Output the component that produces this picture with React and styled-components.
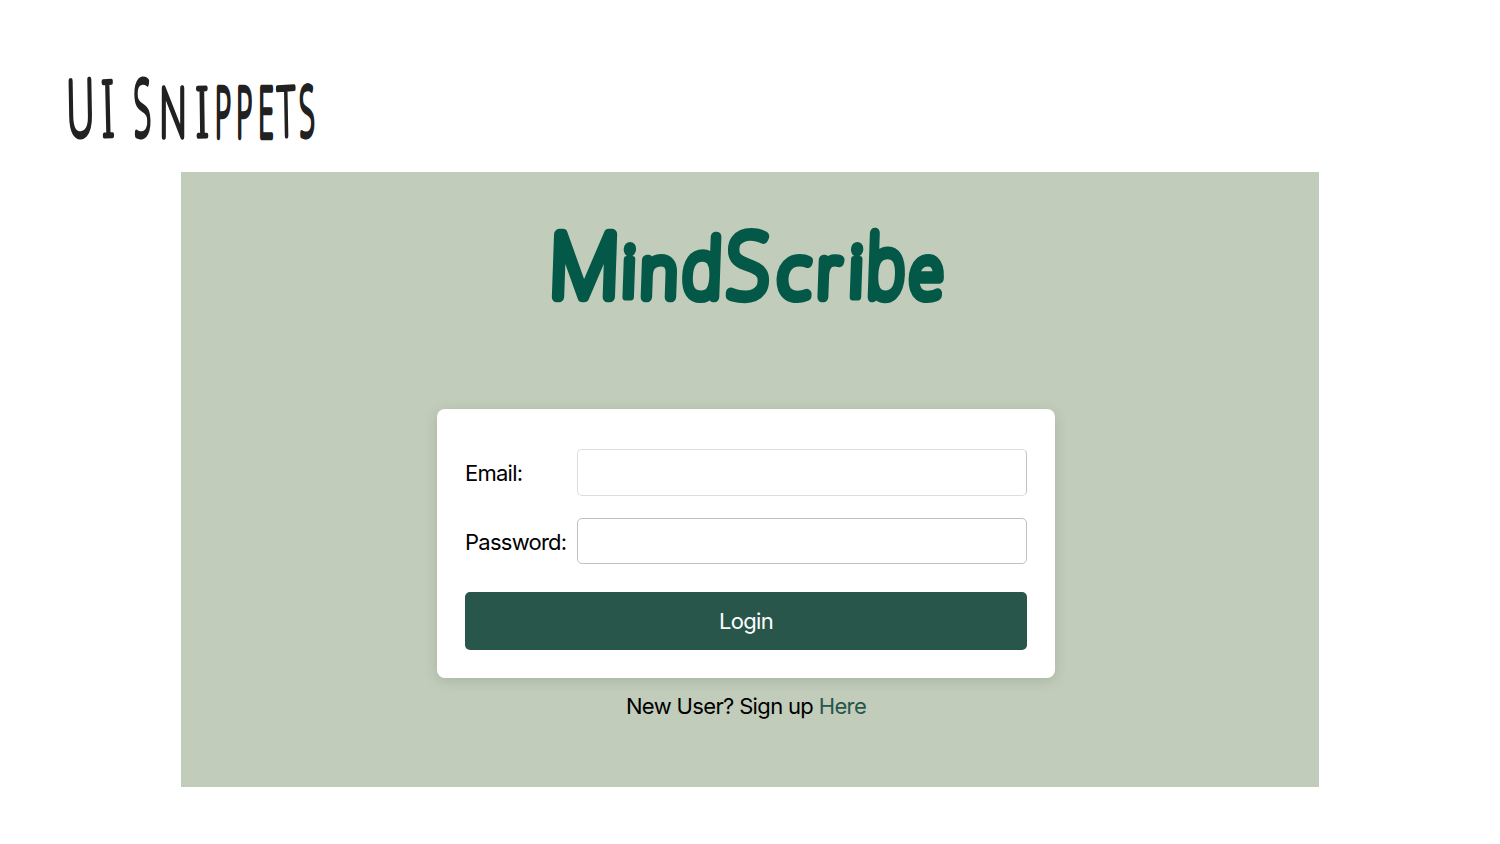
import React from "react";
import styled, { createGlobalStyle } from "styled-components";

const fields = [
  { id: "email", label: "Email:", type: "email", height: 47, border: "#dcdedd" },
  { id: "password", label: "Password:", type: "password", height: 46, border: "#c0c2c1" },
];

const App = () => {
  return (
    <>
      <GlobalStyle />
      <Slide>
        <SlideTitle>
          <Lettering width="270" height="80" $color="#212121" $stroke={4.8}>
            <g transform="scale(0.4 1)">
              <text y="64.5" fontSize="77">
                <Letter x="9" rotate="-2" textLength="67">U</Letter>
                <Letter x="93" rotate="-2" textLength="36" $stroke={3.4}>I</Letter>
                <tspan> </tspan>
                <tspan x="176" rotate="-3">S</tspan>
                <tspan fontSize="68">
                  <Letter x="238" textLength="69" $stroke={4}>N</Letter>
                  <Letter x="328" rotate="-1" textLength="36" $stroke={3.4}>I</Letter>
                  <tspan x="378 431">PP</tspan>
                  <tspan x="486">E</tspan>
                  <Letter x="535" rotate="-2" textLength="43" $stroke={4}>T</Letter>
                  <tspan x="590" rotate="-3">S</tspan>
                </tspan>
              </text>
            </g>
          </Lettering>
        </SlideTitle>

        <Screen>
          <Brand>
            <Lettering width="410" height="90" $color="#045847" $stroke={10}>
              <g transform="translate(5.5 0) skewX(-2) scale(0.88 1)">
                <text y="77" fontSize="70">
                  <Letter x="5" fontSize="88" textLength="80">M</Letter>
                  <Dotted x="87">i</Dotted>
                  <Letter x="109" textLength="42">n</Letter>
                  <Letter x="157" fontSize="79" textLength="44">d</Letter>
                  <tspan x="207" fontSize="88">S</tspan>
                  <Letter x="265" textLength="36">c</Letter>
                  <tspan x="310">r</tspan>
                  <Dotted x="345">i</Dotted>
                  <Letter x="366" fontSize="84" textLength="43">b</Letter>
                  <tspan x="415">e</tspan>
                </text>
              </g>
            </Lettering>
          </Brand>

          <LoginCard onSubmit={(e) => e.preventDefault()}>
            {fields.map((field) => (
              <Field key={field.id}>
                <Label htmlFor={field.id}>{field.label}</Label>
                <Input
                  id={field.id}
                  type={field.type}
                  $height={field.height}
                  $border={field.border}
                />
              </Field>
            ))}
            <LoginButton type="submit">Login</LoginButton>
          </LoginCard>

          <SignUp>
            New User? Sign up <SignUpLink href="#">Here</SignUpLink>
          </SignUp>
        </Screen>
      </Slide>
    </>
  );
};

const GlobalStyle = createGlobalStyle`
  * {
    box-sizing: border-box;
  }

  body {
    margin: 0;
    background: #ffffff;
    font-family: Inter, "Liberation Sans", sans-serif;
  }
`;

const Slide = styled.main`
  width: 1500px;
  height: 844px;
  padding-top: 72px;
  overflow: hidden;
`;

const SlideTitle = styled.h1`
  height: 100px;
  margin: 0;
  padding-left: 64px;
`;

// Thin letters thickened with a round stroke, for the handwritten look
const Lettering = styled.svg`
  display: block;
  overflow: visible;

  text {
    font-family: "Noto Sans", sans-serif;
    font-weight: 100;
    fill: ${(p) => p.$color};
    stroke: ${(p) => p.$color};
    stroke-width: ${(p) => p.$stroke}px;
    stroke-linejoin: round;
    stroke-linecap: round;
  }

  text,
  tspan {
    vector-effect: non-scaling-stroke;
  }
`;

// A letter squeezed or stretched to its own width
const Letter = styled.tspan.attrs({ lengthAdjust: "spacingAndGlyphs" })`
  ${(p) => p.$stroke && `stroke-width: ${p.$stroke}px;`}
`;

const Dotted = styled.tspan`
  font-weight: 400;
  stroke-width: 6.5px;
`;

const Screen = styled.section`
  display: flex;
  flex-direction: column;
  align-items: center;
  width: 1138px;
  height: 615px;
  margin: 0 auto;
  padding: 48px 8px 0 0;
  background: #c1ccba;
`;

const Brand = styled.h2`
  height: 189px;
  margin: 0;
`;

const LoginCard = styled.form`
  display: flex;
  flex-direction: column;
  width: 618px;
  height: 269px;
  padding: 40px 28px 28px;
  border-radius: 8px;
  background: #ffffff;
  box-shadow: 0 3px 14px rgba(0, 0, 0, 0.12);
`;

const Field = styled.div`
  display: flex;
  align-items: center;
  justify-content: space-between;
  margin-bottom: 22px;
`;

const Label = styled.label`
  padding-top: 1px;
  color: #000000;
  font-size: 22px;
  letter-spacing: -0.75px;
`;

const Input = styled.input`
  width: 450px;
  height: ${(p) => p.$height}px;
  padding: 0 12px;
  border: 1px solid ${(p) => p.$border};
  border-right-color: #c0c2c1;
  border-radius: 5px;
  background: #ffffff;
  font: inherit;
  font-size: 22px;
`;

const LoginButton = styled.button`
  height: 58px;
  margin-top: 6px;
  border: none;
  border-radius: 5px;
  background: #28564b;
  color: #ffffff;
  font: inherit;
  font-size: 22px;
  letter-spacing: -0.7px;
  cursor: pointer;
`;

const SignUp = styled.p`
  margin: 15px 0 0;
  color: #000000;
  font-size: 22px;
  line-height: 27px;
  letter-spacing: -0.65px;
`;

const SignUpLink = styled.a`
  color: #28564b;
  text-decoration: none;
`;

export default App;
